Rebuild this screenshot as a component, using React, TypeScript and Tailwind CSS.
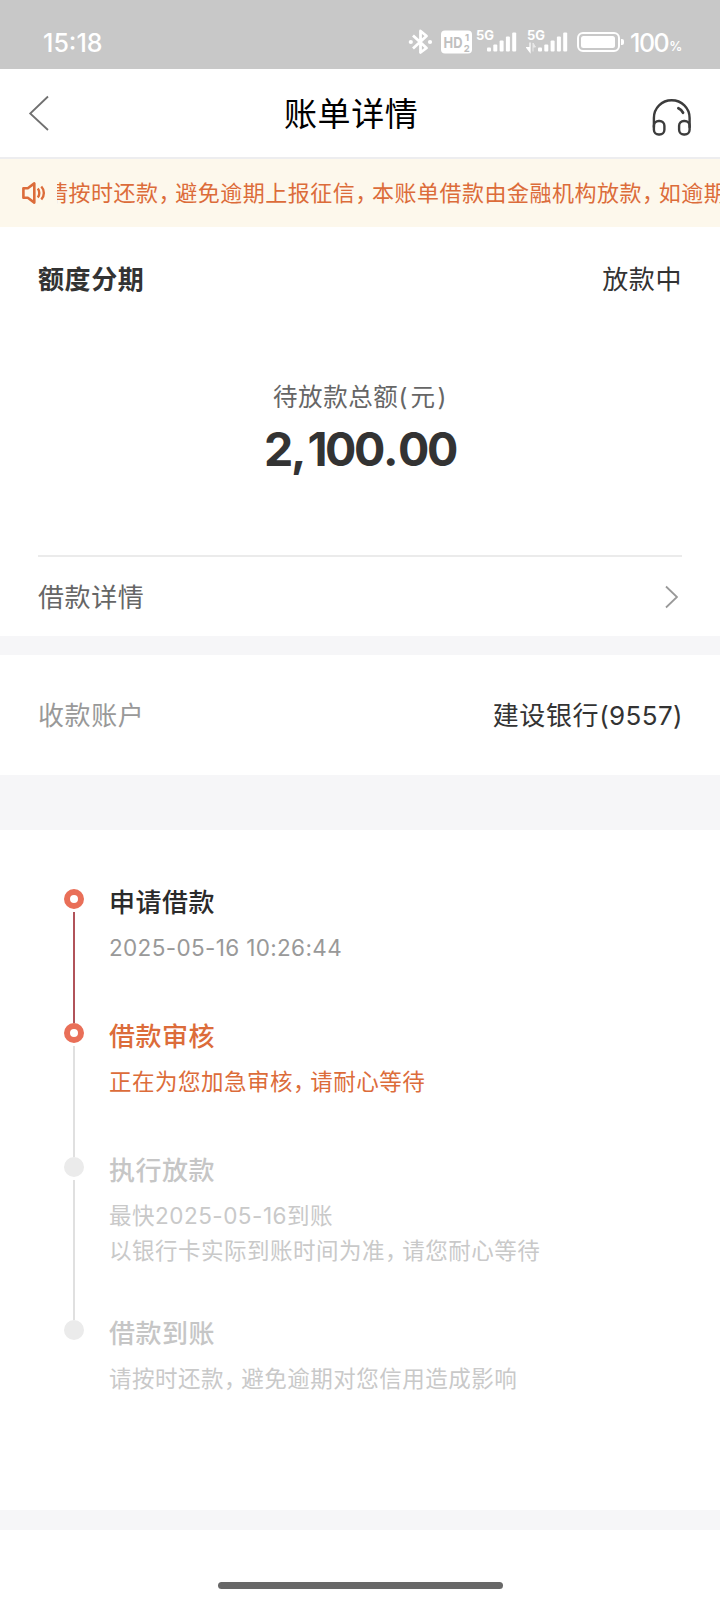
import { Fragment } from 'react'

interface Step {
  title: string
  lines: string[]
  state: 'done' | 'active' | 'pending'
  height: string
}

const steps: Step[] = [
  { title: '申请借款', lines: ['2025-05-16 10:26:44'], state: 'done', height: 'h-[134px]' },
  { title: '借款审核', lines: ['正在为您加急审核，请耐心等待'], state: 'active', height: 'h-[134px]' },
  {
    title: '执行放款',
    lines: ['最快2025-05-16到账', '以银行卡实际到账时间为准，请您耐心等待'],
    state: 'pending',
    height: 'h-[163px]',
  },
  { title: '借款到账', lines: ['请按时还款，避免逾期对您信用造成影响'], state: 'pending', height: 'h-[90px]' },
]

const titleColors = {
  done: 'text-[#2b2b2b]',
  active: 'text-[#dc6c3a]',
  pending: 'text-[#c6c6c6]',
}

const lineColors = {
  done: 'text-[#999999] tracking-[0.35px]',
  active: 'text-[#dc6c3a] tracking-[0.5px]',
  pending: 'text-[#c9c9c9] tracking-[0.5px]',
}

const railColors = {
  done: 'bg-[#b1535a]',
  active: 'bg-[#e0e0e0]',
  pending: 'bg-[#e0e0e0]',
}

// Full-width commas take less room than a whole character cell
function Text({ children }: { children: string }) {
  const parts = children.split('，')
  return (
    <>
      {parts.map((part, i) => (
        <Fragment key={i}>
          {i > 0 && <span className="tracking-[-0.24em]">，</span>}
          {part}
        </Fragment>
      ))}
    </>
  )
}

function Bars() {
  return (
    <g fill="#fff">
      <rect x="11" y="20" width="4" height="4" rx="1" />
      <rect x="17.3" y="17" width="4" height="7" rx="1" />
      <rect x="23.6" y="13" width="4" height="11" rx="1" />
      <rect x="29.9" y="9" width="4" height="15" rx="1" />
      <rect x="36.2" y="5" width="4" height="19" rx="1" />
    </g>
  )
}

function StatusBar() {
  return (
    <div className="flex h-[69px] items-start justify-between bg-[#c8c8c8] pt-7 pr-[36px] pl-[43px] text-white">
      <span className="pt-px text-[25px] leading-[29px] font-medium">15:18</span>
      <div className="flex h-[28px] w-[276px] items-start">
        <svg width="26" height="28" viewBox="0 0 26 28" fill="none" stroke="#fff" strokeWidth="2.8">
          <path d="M5 7.5L18.5 20 12.5 24.5V3L18.5 8 5 20.5" strokeLinejoin="round" />
          <circle cx="2.8" cy="14" r="2.1" fill="#fff" stroke="none" />
          <circle cx="22" cy="14" r="2.1" fill="#fff" stroke="none" />
        </svg>
        <svg className="ml-[7px]" width="31" height="28" viewBox="0 0 31 28">
          <rect y="2.5" width="31" height="23" rx="4" fill="#fff" />
          <text x="2.5" y="19.5" fontSize="15" fontWeight="700" fill="#c0c0c0" textLength="19" lengthAdjust="spacingAndGlyphs">HD</text>
          <text x="24" y="12.5" fontSize="9.5" fontWeight="700" fill="#bdbdbd">1</text>
          <text x="22.8" y="23.5" fontSize="9.5" fontWeight="700" fill="#bdbdbd">2</text>
        </svg>
        <svg className="ml-1" width="41" height="28" viewBox="0 0 41 28">
          <text x="0" y="12.3" fontSize="12.5" fontWeight="700" fill="#fff" textLength="18" lengthAdjust="spacingAndGlyphs">5G</text>
          <g transform="translate(0 -0.5)"><Bars /></g>
        </svg>
        <svg className="ml-[9px]" width="42" height="28" viewBox="0 0 42 28">
          <text x="1" y="12.3" fontSize="12.5" fontWeight="700" fill="#fff" textLength="18" lengthAdjust="spacingAndGlyphs">5G</text>
          <path d="M4 14.5v9M0.5 19.5l3.5 4.5v-4.5z" stroke="#fff" strokeWidth="1.2" fill="#fff" />
          <path d="M7 23.5v-8.5l2.5 4H7" stroke="#fff" strokeWidth="1" fill="#fff" opacity="0.6" />
          <g transform="translate(1 -0.5)"><Bars /></g>
        </svg>
        <svg className="ml-[9px]" width="47" height="28" viewBox="0 0 47 28">
          <rect x="1" y="5" width="41" height="18" rx="5" fill="none" stroke="#fff" strokeWidth="2" />
          <rect x="4" y="8" width="34" height="12" rx="2.5" fill="#fff" />
          <path d="M44 11h1a2 2 0 0 1 2 2v2a2 2 0 0 1-2 2h-1z" fill="#fff" />
        </svg>
        <span className="ml-[6px] pt-px text-[25px] leading-[29px] font-medium tracking-[-1.5px]">100</span>
        <span className="ml-[1px] pt-[8px] text-[13px] leading-[20px] font-semibold tracking-[-1px]">%</span>
      </div>
    </div>
  )
}

function Header() {
  return (
    <header className="flex h-[90px] items-center border-b-2 border-[#ededef] px-7">
      <svg width="40" height="40" viewBox="0 0 40 40" fill="none" stroke="#707070" strokeWidth="1.8">
        <path d="M20 3.5L2.2 20.5L20 37" />
      </svg>
      <h1 className="mt-0.5 ml-[216px] text-[33px] leading-none tracking-[0.6px] text-black">账单详情</h1>
      <svg className="mt-[7px] ml-auto" width="40" height="40" viewBox="0 0 40 40" fill="none" stroke="#3c3c3c" strokeWidth="2.4" strokeLinecap="round">
        <path d="M1.9 30V21C1.9 11 9.8 3.2 19.7 3.2S37.6 11 37.6 21v9" />
        <rect x="1.9" y="24" width="10.5" height="13.5" rx="4.8" />
        <rect x="27.1" y="24" width="10.5" height="13.5" rx="4.8" />
        <path d="M26.4 11.3c2.2 1 3.6 2.4 4.6 4.4" strokeWidth="2.8" />
      </svg>
    </header>
  )
}

function Notice() {
  return (
    <div className="flex h-[68px] items-center overflow-hidden bg-[#fdf8ec] pl-[22px] text-[#dc6c3a]">
      <svg className="shrink-0" width="24" height="24" viewBox="0 0 24 24" fill="none" stroke="#dc6c3a" strokeWidth="2.6">
        <path d="M1.4 7.2h4.4L12.3 2.4v19.2l-6.5-4.8H1.4z" strokeLinejoin="round" />
        <path d="M15.8 7.5c2 2.4 2 6.6 0 9" strokeWidth="2.4" />
        <path d="M19.3 5.5c3.4 3.6 3.4 9.4 0 13" strokeWidth="2.4" />
      </svg>
      <div className="ml-[11px] flex-1 overflow-hidden">
        <p className="-ml-[11px] pb-px text-[22px] leading-[34px] tracking-[0.5px] whitespace-nowrap">
          <Text>请按时还款，避免逾期上报征信，本账单借款由金融机构放款，如逾期</Text>
        </p>
      </div>
    </div>
  )
}

function Summary() {
  return (
    <section className="flex h-[409px] flex-col px-[38px]">
      <div className="flex items-center justify-between pt-[35px] text-[26px] leading-[36px] tracking-[0.6px] text-[#333333]">
        <h2 className="font-bold">额度分期</h2>
        <span>放款中</span>
      </div>
      <div className="flex flex-1 flex-col items-center pt-[82px]">
        <p className="text-[24.5px] leading-[34px] tracking-[0.6px] text-[#666666]">
          待放款总额<span className="tracking-[3px]">(</span>元<span className="pl-0.5">)</span>
        </p>
        <p className="mt-[11px] text-[46.5px] leading-[48px] font-bold tracking-[-2.4px] text-[#333333]">
          2<span className="tracking-[1px]">,</span>100<span className="tracking-[-0.5px]">.</span>00
        </p>
      </div>
      <div className="flex h-[81px] items-center justify-between border-t-2 border-[#ebebeb]">
        <span className="pt-0.5 text-[26px] tracking-[0.6px] text-[#666666]">借款详情</span>
        <svg className="mr-1" width="13" height="24" viewBox="0 0 13 24" fill="none" stroke="#999" strokeWidth="1.8">
          <path d="M1 1.5L12 12L1 22.5" />
        </svg>
      </div>
    </section>
  )
}

function Timeline() {
  return (
    <section className="h-[680px] pt-[53px] pl-16">
      {steps.map((step, i) => (
        <div key={step.title} className={`flex ${step.height}`}>
          <div className="-mb-1.5 flex w-5 flex-col items-center pt-1.5">
            {step.state === 'pending' ? (
              <span className="size-5 shrink-0 rounded-full bg-[#ebebeb]" />
            ) : (
              <span className="size-5 shrink-0 rounded-full border-6 border-[#e96f58] bg-white" />
            )}
            {i < steps.length - 1 && <span className={`mt-[3px] w-0.5 flex-1 ${railColors[step.state]}`} />}
          </div>
          <div className="pt-0.5 pl-[25px]">
            <h3 className={`text-[26px] leading-[36px] font-medium tracking-[0.5px] ${titleColors[step.state]}`}>
              {step.title}
            </h3>
            <div className={`mt-[9px] text-[22.5px] leading-[35px] ${lineColors[step.state]}`}>
              {step.lines.map((line) => (
                <p key={line}>
                  <Text>{line}</Text>
                </p>
              ))}
            </div>
          </div>
        </div>
      ))}
    </section>
  )
}

export default function App() {
  return (
    <div className="flex h-[1600px] w-[720px] flex-col overflow-hidden bg-white font-[Inter,'Noto_Sans_CJK_SC',sans-serif]">
      <StatusBar />
      <Header />
      <Notice />
      <Summary />
      <div className="h-[19px] bg-[#f6f6f8]" />
      <section className="flex h-[120px] items-center justify-between px-[38px] pt-px text-[26px] tracking-[0.6px]">
        <span className="text-[#999999]">收款账户</span>
        <span className="-mr-px text-[#333333]">
          建设银行<span className="tracking-[0.4px]">(9557)</span>
        </span>
      </section>
      <div className="h-[55px] bg-[#f6f6f8]" />
      <Timeline />
      <div className="h-5 bg-[#f6f6f8]" />
      <div className="flex flex-1 items-end justify-center pb-[11px]">
        <div className="h-[7px] w-[285px] rounded-full bg-[#686868]" />
      </div>
    </div>
  )
}
